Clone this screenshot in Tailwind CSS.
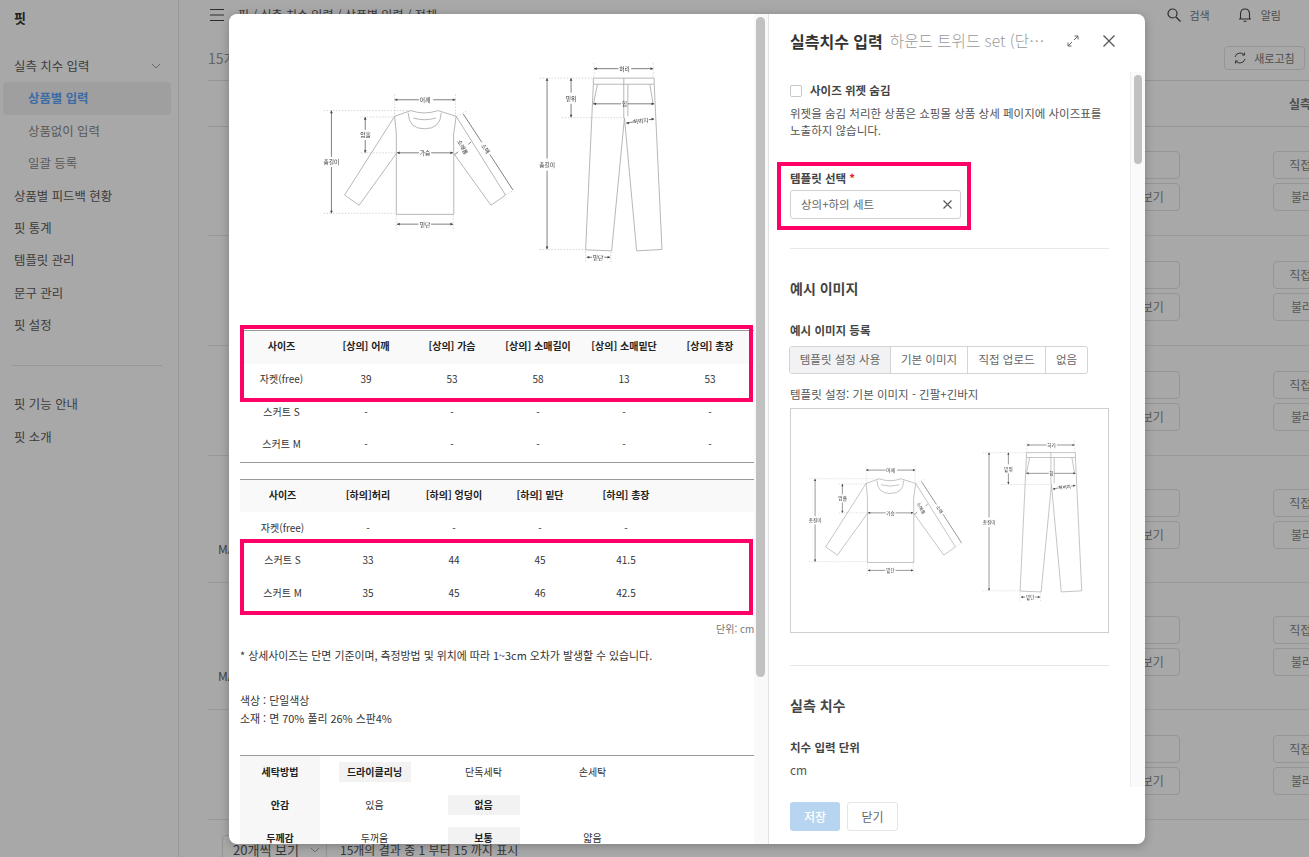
<!DOCTYPE html>
<html lang="ko">
<head>
<meta charset="UTF-8" />
<title>실측 치수 입력</title>
<script src="https://cdn.jsdelivr.net/npm/@tailwindcss/browser@4"></script>
</head>
<body class="w-[1309px] h-[857px] overflow-hidden relative bg-white text-[12px] text-[#555] font-['Noto_Sans_CJK_KR','Noto_Sans',sans-serif]">

<!-- garment drawing, used twice -->
<svg class="hidden">
  <symbol id="garment" viewBox="0 0 1568 858" overflow="visible">
    <g fill="none" stroke="#aaa" stroke-width="2.5">
      <path d="M538 268 L490 285 L342 518 L385 548 L495 395 L495 575 L665 575 L665 395 L775 548 L818 518 L672 285 L618 268" />
      <path d="M538 268 Q578 282 618 268 M530 275 Q532 322 578 322 Q626 322 628 275 M545 290 Q578 300 612 290" />
      <path d="M490 285 Q498 340 495 395 M672 285 Q660 340 665 395" />
      <path d="M1078 172 L1258 172 L1258 190 L1078 190 Z M1078 190 L1055 680 L1132 683 L1170 290 L1206 683 L1281 679 L1258 190" />
      <path d="M1168 172 L1168 290 M1180 190 L1180 285 M1090 190 L1078 250 M1245 190 L1255 250" />
    </g>
    <g fill="none" stroke="#aaa" stroke-width="1.5" stroke-dasharray="4 5">
      <path d="M490 220 L490 285 M670 220 L670 285 M280 268 L535 268 M280 572 L495 572 M390 287 L490 287 M390 393 L495 393 M495 578 L495 625 M663 578 L663 625 M675 285 L705 268 M818 518 L843 503" />
      <path d="M1080 128 L1080 172 M1255 128 L1255 172 M918 172 L1078 172 M918 679 L1055 679 M985 289 L1170 289 M1055 684 L1055 718 M1130 686 L1130 718" />
    </g>
    <g fill="none" stroke="#444" stroke-width="2">
      <path d="M490 236 L562 236 M604 236 L670 236 M303 268 L303 405 M303 435 L303 572 M403 287 L403 325 M403 355 L403 393 M497 393 L562 393 M598 393 L663 393 M497 604 L560 604 M598 604 L663 604" />
      <path d="M693 278 L748 362 M772 398 L840 503 M668 398 L678 390 M708 368 L716 361" />
      <path d="M1080 144 L1152 144 M1190 144 L1255 144 M941 172 L941 410 M941 446 L941 678 M1012 172 L1012 215 M1012 248 L1012 288 M1078 248 L1160 248 M1180 248 L1258 248 M1175 305 L1195 302 M1242 295 L1258 293 M1058 702 L1074 702 M1110 702 L1128 702" />
    </g>
    <path fill="#444" d="M490 236 l8 -4 v8z M670 236 l-8 -4 v8z M303 268 l-4 8 h8z M303 572 l-4 -8 h8z M403 287 l-4 8 h8z M403 393 l-4 -8 h8z M497 393 l8 -4 v8z M663 393 l-8 -4 v8z M497 604 l8 -4 v8z M663 604 l-8 -4 v8z M1080 144 l8 -4 v8z M1255 144 l-8 -4 v8z M941 172 l-4 8 h8z M941 678 l-4 -8 h8z M1012 172 l-4 8 h8z M1012 288 l-4 -8 h8z M1078 248 l8 -4 v8z M1258 248 l-8 -4 v8z M1175 305 l8 -4 v8z M1258 293 l-8 -4 v8z M1058 702 l8 -4 v8z M1128 702 l-8 -4 v8z" />
    <g fill="#333" font-size="17" text-anchor="middle" dominant-baseline="central">
      <text x="580" y="236">어깨</text>
      <text x="303" y="420">총길이</text>
      <text x="404" y="340">암홀</text>
      <text x="580" y="393">가슴</text>
      <text x="580" y="604">밑단</text>
      <text x="760" y="380" transform="rotate(56 760 380)">소매</text>
      <text x="692" y="376" transform="rotate(62 692 376)">소매통</text>
      <text x="1170" y="144">허리</text>
      <text x="941" y="428">총길이</text>
      <text x="1012" y="232">밑위</text>
      <text x="1170" y="248">힙</text>
      <text x="1218" y="298" transform="rotate(-6 1218 298)">허벅지</text>
      <text x="1092" y="702">밑단</text>
    </g>
  </symbol>
</svg>

<!-- page behind the modal -->
<div class="flex h-full">
  <!-- sidebar -->
  <aside class="w-[179px] shrink-0 border-r border-[#e5e5e5] h-full">
    <div class="h-[34px] pl-[14px] pt-[8px] text-[13px] font-bold text-[#333]">핏</div>
    <nav class="pt-[16px] text-[12.4px] text-[#5c5c5c]">
      <div class="h-[32.3px] pl-[14px] pr-[17px] flex items-center justify-between">
        <span>실측 치수 입력</span>
        <svg width="10" height="6" viewBox="0 0 10 6" fill="none" stroke="#999"><path d="M1 1 L5 5 L9 1" /></svg>
      </div>
      <div class="h-[33px] mx-[3px] w-[168px] pl-[25px] flex items-center rounded bg-[#f1f1f1] font-bold text-[#5ba4fa]">상품별 입력</div>
      <div class="h-[32.3px] pl-[28px] flex items-center text-[#888]">상품없이 입력</div>
      <div class="h-[32.3px] pl-[28px] flex items-center text-[#888]">일괄 등록</div>
      <div class="h-[32.3px] pl-[14px] flex items-center">상품별 피드백 현황</div>
      <div class="h-[32.3px] pl-[14px] flex items-center">핏 통계</div>
      <div class="h-[32.3px] pl-[14px] flex items-center">템플릿 관리</div>
      <div class="h-[32.3px] pl-[14px] flex items-center">문구 관리</div>
      <div class="h-[32.3px] pl-[14px] flex items-center">핏 설정</div>
      <div class="mx-[12px] w-[150px] border-t border-[#e5e5e5] mt-[24px] mb-[22px]"></div>
      <div class="h-[32.3px] pl-[14px] flex items-center">핏 기능 안내</div>
      <div class="h-[32.3px] pl-[14px] flex items-center">핏 소개</div>
    </nav>
  </aside>

  <!-- main -->
  <main class="flex-1 min-w-0 pl-[29px] overflow-hidden flex flex-col">
    <header class="h-[30px] shrink-0 flex items-center pl-[2px] pr-[28px]">
      <svg width="14" height="12" viewBox="0 0 14 12" fill="none" stroke="#444"><path d="M0 .5 H14 M0 6 H14 M0 11.5 H14" /></svg>
      <span class="ml-[14px] text-[#555]">핏 / 실측 치수 입력 / 상품별 입력 / 전체</span>
      <div class="ml-auto flex items-center gap-[9px] text-[#777] text-[11px]">
        <svg width="14" height="14" viewBox="0 0 14 14" fill="none" stroke="#444" stroke-width="1.2"><circle cx="5.5" cy="5.5" r="4.5" /><path d="M9 9 L13.5 13.5" /></svg>
        <span>검색</span>
        <svg class="ml-[19px]" width="14" height="14" viewBox="0 0 14 14" fill="none" stroke="#444" stroke-width="1.1"><path d="M1 11 H13 M2.5 11 V6 Q2.5 1 7 1 Q11.5 1 11.5 6 V11 M5.5 13.3 H8.5" /></svg>
        <span>알림</span>
      </div>
    </header>

    <div class="h-[51px] shrink-0 border-b border-[#e3e3e3] flex items-center justify-between pr-[4px] pt-[6px]">
      <span class="text-[14px] text-[#999]">15개</span>
      <button class="w-[81px] h-[24px] rounded border border-[#e3e3e3] flex items-center justify-center gap-[8px] text-[11px] text-[#777]">
        <svg width="12" height="12" viewBox="0 0 12 12" fill="none" stroke="#555"><path d="M1 5 Q2 1 6 1 Q9 1 10.5 3 M10.5 .5 V3 H8 M11 7 Q10 11 6 11 Q3 11 1.5 9 M1.5 11.5 V9 H4" /></svg>
        새로고침
      </button>
    </div>

    <div class="h-[46px] shrink-0 border-b border-[#e3e3e3] flex items-center justify-end font-bold text-[#777] w-[1141px]">
      <span class="w-[60px] whitespace-nowrap">실측 치수</span>
    </div>

    <!-- product rows -->
    <div class="h-[109px] shrink-0 border-b border-[#e8e8e8] flex items-center pl-[892px] gap-[93px] w-[1200px]">
      <div class="w-[80px] flex flex-col gap-[4px]"><button class="h-[28px] pl-[8px] text-left border border-[#e3e3e3] rounded text-[#888]">수정</button><button class="h-[28px] border border-[#e3e3e3] rounded text-[#888]">미리 보기</button></div>
      <div class="w-[80px] flex flex-col gap-[4px]"><button class="h-[28px] border border-[#e3e3e3] rounded text-[#888]">직접 입력</button><button class="h-[28px] border border-[#e3e3e3] rounded text-[#888]">불러오기</button></div>
    </div>
    <div class="h-[110px] shrink-0 border-b border-[#e8e8e8] flex items-center pl-[892px] gap-[93px] w-[1200px]">
      <div class="w-[80px] flex flex-col gap-[4px]"><button class="h-[28px] pl-[8px] text-left border border-[#e3e3e3] rounded text-[#888]">수정</button><button class="h-[28px] border border-[#e3e3e3] rounded text-[#888]">미리 보기</button></div>
      <div class="w-[80px] flex flex-col gap-[4px]"><button class="h-[28px] border border-[#e3e3e3] rounded text-[#888]">직접 입력</button><button class="h-[28px] border border-[#e3e3e3] rounded text-[#888]">불러오기</button></div>
    </div>
    <div class="h-[110px] shrink-0 border-b border-[#e8e8e8] flex items-center pl-[892px] gap-[93px] w-[1200px]">
      <div class="w-[80px] flex flex-col gap-[4px]"><button class="h-[28px] pl-[8px] text-left border border-[#e3e3e3] rounded text-[#888]">수정</button><button class="h-[28px] border border-[#e3e3e3] rounded text-[#888]">미리 보기</button></div>
      <div class="w-[80px] flex flex-col gap-[4px]"><button class="h-[28px] border border-[#e3e3e3] rounded text-[#888]">직접 입력</button><button class="h-[28px] border border-[#e3e3e3] rounded text-[#888]">불러오기</button></div>
    </div>
    <div class="h-[127px] shrink-0 border-b border-[#e8e8e8] flex items-center pl-[10px] w-[1200px]">
      <span class="self-end pb-[24px] w-[882px] text-[#666]">MA</span>
      <div class="w-[80px] mr-[93px] flex flex-col gap-[4px]"><button class="h-[28px] pl-[8px] text-left border border-[#e3e3e3] rounded text-[#888]">수정</button><button class="h-[28px] border border-[#e3e3e3] rounded text-[#888]">미리 보기</button></div>
      <div class="w-[80px] flex flex-col gap-[4px]"><button class="h-[28px] border border-[#e3e3e3] rounded text-[#888]">직접 입력</button><button class="h-[28px] border border-[#e3e3e3] rounded text-[#888]">불러오기</button></div>
    </div>
    <div class="h-[127px] shrink-0 border-b border-[#e8e8e8] flex items-center pl-[10px] w-[1200px]">
      <span class="self-end pb-[24px] w-[882px] text-[#666]">MA</span>
      <div class="w-[80px] mr-[93px] flex flex-col gap-[4px]"><button class="h-[28px] pl-[8px] text-left border border-[#e3e3e3] rounded text-[#888]">수정</button><button class="h-[28px] border border-[#e3e3e3] rounded text-[#888]">미리 보기</button></div>
      <div class="w-[80px] flex flex-col gap-[4px]"><button class="h-[28px] border border-[#e3e3e3] rounded text-[#888]">직접 입력</button><button class="h-[28px] border border-[#e3e3e3] rounded text-[#888]">불러오기</button></div>
    </div>
    <div class="h-[110px] shrink-0 border-b border-[#e8e8e8] flex items-center pl-[892px] gap-[93px] w-[1200px]">
      <div class="w-[80px] flex flex-col gap-[4px]"><button class="h-[28px] pl-[8px] text-left border border-[#e3e3e3] rounded text-[#888]">수정</button><button class="h-[28px] border border-[#e3e3e3] rounded text-[#888]">미리 보기</button></div>
      <div class="w-[80px] flex flex-col gap-[4px]"><button class="h-[28px] border border-[#e3e3e3] rounded text-[#888]">직접 입력</button><button class="h-[28px] border border-[#e3e3e3] rounded text-[#888]">불러오기</button></div>
    </div>

    <!-- pagination -->
    <div class="mt-[15px] flex items-center ml-[14px] text-[#555] shrink-0">
      <div class="w-[105px] h-[30px] border border-[#e3e3e3] rounded-tl flex items-center justify-between pl-[10px] pr-[6px] text-[13px]">
        <span>20개씩 보기</span>
        <svg width="10" height="6" viewBox="0 0 10 6" fill="none" stroke="#aaa"><path d="M1 1 L5 5 L9 1" /></svg>
      </div>
      <span class="ml-[13px]">15개의 결과 중 1 부터 15 까지 표시</span>
    </div>
  </main>
</div>

<!-- dimmed backdrop -->
<div class="absolute inset-0 bg-black/[.34]"></div>

<!-- modal -->
<div class="absolute left-[229px] top-[14px] w-[916px] h-[830px] bg-white rounded-lg overflow-hidden flex shadow-[0_2px_10px_rgba(0,0,0,0.25)]">

  <!-- left: product detail -->
  <div class="w-[540px] shrink-0 flex border-r border-[#e2e2e2]">
    <div class="w-[525px] shrink-0 relative overflow-hidden text-[10px] text-[#333]">
      <svg class="w-[530px] h-[290px] mt-[6px] blur-[0.5px]"><use href="#garment" width="530" height="290" /></svg>

      <div class="pl-[11px] pt-[16px]">
        <!-- top sizes -->
        <div class="w-[514px] border-t border-[#999] mt-[4px]">
          <div class="grid grid-cols-[83px_repeat(5,86px)] h-[32.7px] pb-[3px] items-center text-center font-bold bg-[#f9f9f9] text-[#222]">
            <span>사이즈</span><span>[상의] 어깨</span><span>[상의] 가슴</span><span>[상의] 소매길이</span><span>[상의] 소매밑단</span><span>[상의] 총장</span>
          </div>
          <div class="grid grid-cols-[83px_repeat(5,86px)] h-[32.7px] pb-[3px] items-center text-center">
            <span>자켓(free)</span><span>39</span><span>53</span><span>58</span><span>13</span><span>53</span>
          </div>
          <div class="grid grid-cols-[83px_repeat(5,86px)] h-[32.7px] pb-[3px] items-center text-center">
            <span>스커트 S</span><span>-</span><span>-</span><span>-</span><span>-</span><span>-</span>
          </div>
          <div class="grid grid-cols-[83px_repeat(5,86px)] h-[32.7px] pb-[3px] items-center text-center">
            <span>스커트 M</span><span>-</span><span>-</span><span>-</span><span>-</span><span>-</span>
          </div>
        </div>
        <div class="w-[514px] border-t border-[#999]"></div>

        <!-- bottom sizes -->
        <div class="w-[514px] border-t border-[#999] mt-[16px]">
          <div class="grid grid-cols-[85px_repeat(5,86px)] h-[32.7px] pb-[3px] items-center text-center font-bold bg-[#f9f9f9] text-[#222]">
            <span>사이즈</span><span>[하의]허리</span><span>[하의] 엉덩이</span><span>[하의] 밑단</span><span>[하의] 총장</span><span></span>
          </div>
          <div class="grid grid-cols-[85px_repeat(5,86px)] h-[32.7px] pb-[3px] items-center text-center">
            <span>자켓(free)</span><span>-</span><span>-</span><span>-</span><span>-</span><span></span>
          </div>
          <div class="grid grid-cols-[85px_repeat(5,86px)] h-[32.7px] pb-[3px] items-center text-center">
            <span>스커트 S</span><span>33</span><span>44</span><span>45</span><span>41.5</span><span></span>
          </div>
          <div class="grid grid-cols-[85px_repeat(5,86px)] h-[32.7px] pb-[3px] items-center text-center">
            <span>스커트 M</span><span>35</span><span>45</span><span>46</span><span>42.5</span><span></span>
          </div>
        </div>

        <p class="ml-[476px] mt-[10px] whitespace-nowrap text-[#777] leading-[16px]">단위: cm</p>
        <p class="mt-[9px] text-[10.9px] leading-[18px] whitespace-nowrap">* 상세사이즈는 단면 기준이며, 측정방법 및 위치에 따라 1~3cm 오차가 발생할 수 있습니다.</p>
        <p class="mt-[27px] text-[10.9px] leading-[18px]">색상 : 단일색상</p>
        <p class="text-[10.9px] leading-[18px]">소재 : 면 70% 폴리 26% 스판4%</p>

        <!-- care table -->
        <div class="mt-[28px] w-[514px] border-t border-[#999] grid grid-cols-[80px_109px_109px_109px] auto-rows-[32.7px] items-stretch text-center">
          <span class="bg-[#f7f7f7] font-bold text-[#222] flex items-center justify-center">세탁방법</span>
          <span class="flex items-center justify-center"><b class="w-[72px] h-[20px] bg-[#f2f2f2] flex items-center justify-center text-[#222]">드라이클리닝</b></span>
          <span class="flex items-center justify-center">단독세탁</span>
          <span class="flex items-center justify-center">손세탁</span>
          <span class="bg-[#f7f7f7] font-bold text-[#222] flex items-center justify-center">안감</span>
          <span class="flex items-center justify-center">있음</span>
          <span class="flex items-center justify-center"><b class="w-[72px] h-[20px] bg-[#f2f2f2] flex items-center justify-center text-[#222]">없음</b></span>
          <span></span>
          <span class="bg-[#f7f7f7] font-bold text-[#222] flex items-center justify-center">두께감</span>
          <span class="flex items-center justify-center">두꺼움</span>
          <span class="flex items-center justify-center"><b class="w-[72px] h-[20px] bg-[#f2f2f2] flex items-center justify-center text-[#222]">보통</b></span>
          <span class="flex items-center justify-center">얇음</span>
        </div>
      </div>

      <!-- highlight boxes over the tables -->
      <div class="absolute left-[11px] top-[311px] w-[513px] h-[77px] border-[4px] border-[#ff0066]"></div>
      <div class="absolute left-[11px] top-[525px] w-[513px] h-[76px] border-[4px] border-[#ff0066]"></div>
    </div>
    <div class="flex-1 bg-[#f9f9f9] pt-[3px] pl-[2px]">
      <div class="w-[9px] h-[660px] rounded-full bg-[#c1c1c1]"></div>
    </div>
  </div>

  <!-- right: form -->
  <div class="flex-1 min-w-0 flex flex-col">
    <div class="h-[58px] shrink-0 flex items-center pl-[21px] pr-[30px] pb-[4px]">
      <h2 class="text-[16px] font-bold text-[#333] whitespace-nowrap">실측치수 입력</h2>
      <span class="ml-[7px] text-[15.6px] font-light text-[#999] whitespace-nowrap">하운드 트위드 set (단…</span>
      <svg class="ml-auto" width="12" height="12" viewBox="0 0 12 12" fill="none" stroke="#666"><path d="M7 5 L11 1 M7.5 1 H11 V4.5 M5 7 L1 11 M1 7.5 V11 H4.5" /></svg>
      <svg class="ml-[24px]" width="12" height="12" viewBox="0 0 12 12" fill="none" stroke="#555" stroke-width="1.3"><path d="M.5 .5 L11.5 11.5 M11.5 .5 L.5 11.5" /></svg>
    </div>

    <div class="flex-1 min-h-0 flex">
      <div class="w-[361px] shrink-0 overflow-hidden pl-[21px] pr-[21px] relative">
        <label class="flex items-center gap-[8px] mt-[13px] h-[12px]">
          <span class="w-[12px] h-[12px] rounded-[2px] border border-[#c8c8c8]"></span>
          <span class="font-bold text-[#444] text-[11.5px]">사이즈 위젯 숨김</span>
        </label>
        <p class="mt-[8px] leading-[17px] text-[11.5px]">위젯을 숨김 처리한 상품은 쇼핑몰 상품 상세 페이지에 사이즈표를 노출하지 않습니다.</p>

        <div class="mt-[31px]">
          <div class="font-bold text-[#444] text-[11.5px] leading-[16px]">템플릿 선택 <span class="text-[#e02020]">*</span></div>
          <div class="mt-[4px] w-[171px] h-[29px] border border-[#d0d0d0] rounded-[3px] flex items-center justify-between pl-[10px] pr-[8px] text-[#666] text-[11.5px]">
            <span>상의+하의 세트</span>
            <svg width="9" height="9" viewBox="0 0 9 9" fill="none" stroke="#555" stroke-width="1.1"><path d="M.5 .5 L8.5 8.5 M8.5 .5 L.5 8.5" /></svg>
          </div>
        </div>

        <div class="border-t border-[#e8e8e8] w-[319px] mt-[29px]"></div>

        <h3 class="mt-[29px] text-[14px] font-bold text-[#444] leading-[20px]">예시 이미지</h3>
        <div class="mt-[24px] font-bold text-[#444] text-[11.5px] leading-[16px]">예시 이미지 등록</div>
        <div class="mt-[8px] -ml-[1px] inline-flex h-[28px] border border-[#d4d4d4] rounded-[3px] text-[#666] text-[11.5px] divide-x divide-[#d4d4d4]">
          <span class="w-[101px] flex items-center justify-center bg-[#f2f2f4]">템플릿 설정 사용</span>
          <span class="w-[77px] flex items-center justify-center">기본 이미지</span>
          <span class="w-[78px] flex items-center justify-center">직접 업로드</span>
          <span class="w-[41px] flex items-center justify-center">없음</span>
        </div>
        <p class="mt-[12px] leading-[17px] text-[11.5px]">템플릿 설정: 기본 이미지 - 긴팔+긴바지</p>
        <div class="mt-[5px] w-[319px] h-[225px] border border-[#cfcfcf] overflow-hidden">
          <svg class="w-full h-full blur-[0.3px]" viewBox="215 12 1162 818"><use href="#garment" width="1568" height="858" /></svg>
        </div>

        <div class="border-t border-[#e8e8e8] w-[319px] mt-[32px]"></div>
        <h3 class="mt-[29px] text-[14px] font-bold text-[#444] leading-[20px]">실측 치수</h3>
        <div class="mt-[24px] font-bold text-[#444] text-[11.5px] leading-[16px]">치수 입력 단위</div>
        <p class="mt-[6px] leading-[17px]">cm</p>

        <!-- highlight box over the template field -->
        <div class="absolute left-[8px] top-[90px] w-[194px] h-[68px] border-[4px] border-[#ff0066]"></div>
      </div>
      <div class="flex-1 border-l border-[#eeeeee] bg-[#fafafa] pt-[3px] pl-[3px]">
        <div class="w-[8px] h-[89px] rounded-full bg-[#c1c1c1]"></div>
      </div>
    </div>

    <div class="h-[57px] shrink-0 flex items-start gap-[7px] pl-[21px] pt-[15px]">
      <button class="w-[50px] h-[29px] rounded-[3px] bg-[#b7d4f0] text-white font-medium">저장</button>
      <button class="w-[51px] h-[29px] rounded-[3px] border border-[#e5e5e5] text-[#666]">닫기</button>
    </div>
  </div>
</div>
</body>
</html>
